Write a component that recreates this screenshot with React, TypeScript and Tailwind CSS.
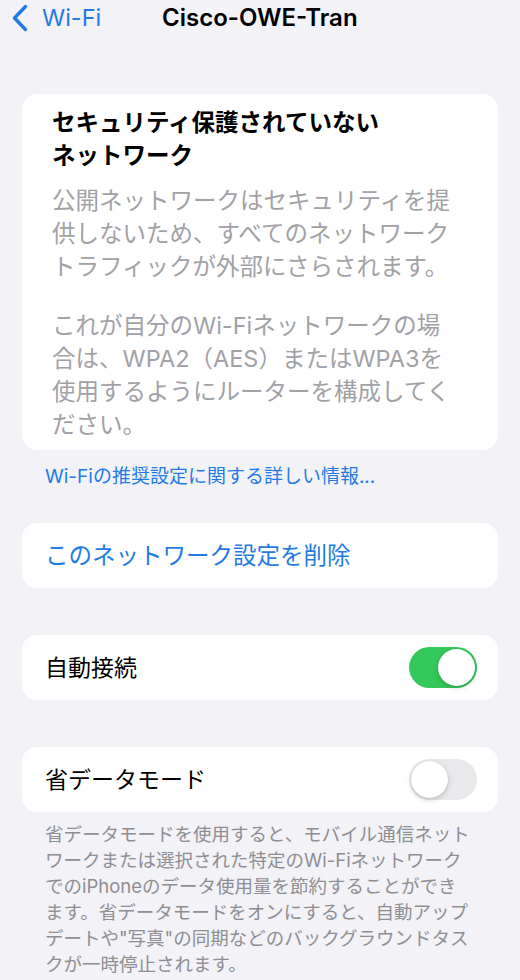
const jp = { fontFamily: '"Inter", "Noto Sans CJK JP", sans-serif' };

function BackChevron() {
  return (
    <svg width="20" height="28" viewBox="0 0 20 28" fill="none" className="shrink-0">
      <path d="M15.5 2.5 4.5 14l11 11.5" stroke="currentColor" strokeWidth="3.4" strokeLinecap="round" strokeLinejoin="round" />
    </svg>
  );
}

function Toggle({ on }: { on: boolean }) {
  return (
    <div
      className={`relative h-[41px] w-[68px] shrink-0 rounded-full ${on ? 'bg-[#34c759]' : 'bg-[#e9e9eb]'}`}
    >
      <div
        className={`absolute top-[2px] h-[37px] w-[37px] rounded-full bg-white shadow-[0_2px_5px_rgba(0,0,0,0.18),0_0_1px_rgba(0,0,0,0.12)] ${on ? 'right-[2px]' : 'left-[2px]'}`}
      />
    </div>
  );
}

function Row({ label, on }: { label: string; on: boolean }) {
  return (
    <div className="mx-[22px] flex h-[65px] items-center justify-between rounded-[15px] bg-white pl-[23px] pr-[21px]">
      <span className="text-[23px] leading-[30px] text-black">{label}</span>
      <Toggle on={on} />
    </div>
  );
}

export default function App() {
  return (
    <div className="min-h-[980px] w-[520px] overflow-hidden bg-[#f2f2f7]" style={jp}>
      {/* nav bar */}
      <div className="relative flex h-[36px] items-center">
        <div className="flex items-center pl-[10px] text-[#1f7be6]">
          <BackChevron />
          <span className="ml-[12px] text-[23.5px] leading-none" style={{ fontFamily: '"Inter", sans-serif' }}>
            Wi-Fi
          </span>
        </div>
        <span
          className="absolute left-[162px] text-[24px] font-semibold leading-none text-black"
          style={{ fontFamily: '"Inter", sans-serif' }}
        >
          Cisco-OWE-Tran
        </span>
      </div>

      {/* security warning */}
      <div className="mx-[22px] mt-[58px] rounded-[15px] bg-white pb-[9px] pl-[30px] pr-[20px] pt-[12px]">
        <p className="whitespace-nowrap text-[23.5px] font-bold leading-[33px] text-black">
          セキュリティ保護されていない
          <br />
          ネットワーク
        </p>
        <p className="mt-[12px] whitespace-nowrap text-[23.5px] leading-[33px] text-[#a1a1a6]">
          公開ネットワークはセキュリティを提
          <br />
          供しないため、すべてのネットワーク
          <br />
          トラフィックが外部にさらされます。
        </p>
        <p className="mt-[26px] whitespace-nowrap text-[23.5px] leading-[33px] text-[#a1a1a6]">
          これが自分のWi-Fiネットワークの場
          <br />
          合は、WPA2（AES）またはWPA3を
          <br />
          使用するようにルーターを構成してく
          <br />
          ださい。
        </p>
      </div>

      <p className="mt-[15px] pl-[45px] text-[19px] leading-[24px] text-[#1f7be6]">
        Wi-Fiの推奨設定に関する詳しい情報...
      </p>

      {/* forget network */}
      <div className="mx-[22px] mt-[34px] flex h-[65px] items-center rounded-[15px] bg-white pl-[23px]">
        <span className="text-[23.5px] leading-[30px] text-[#1f7be6]">このネットワーク設定を削除</span>
      </div>

      <div className="mt-[47px]">
        <Row label="自動接続" on />
      </div>

      <div className="mt-[47px]">
        <Row label="省データモード" on={false} />
      </div>

      <p className="mt-[9px] whitespace-nowrap pl-[45px] text-[18.5px] leading-[26px] text-[#8e8e93]">
        省データモードを使用すると、モバイル通信ネット
        <br />
        ワークまたは選択された特定のWi-Fiネットワーク
        <br />
        でのiPhoneのデータ使用量を節約することができ
        <br />
        ます。省データモードをオンにすると、自動アップ
        <br />
        デートや"写真"の同期などのバックグラウンドタス
        <br />
        クが一時停止されます。
      </p>
    </div>
  );
}
